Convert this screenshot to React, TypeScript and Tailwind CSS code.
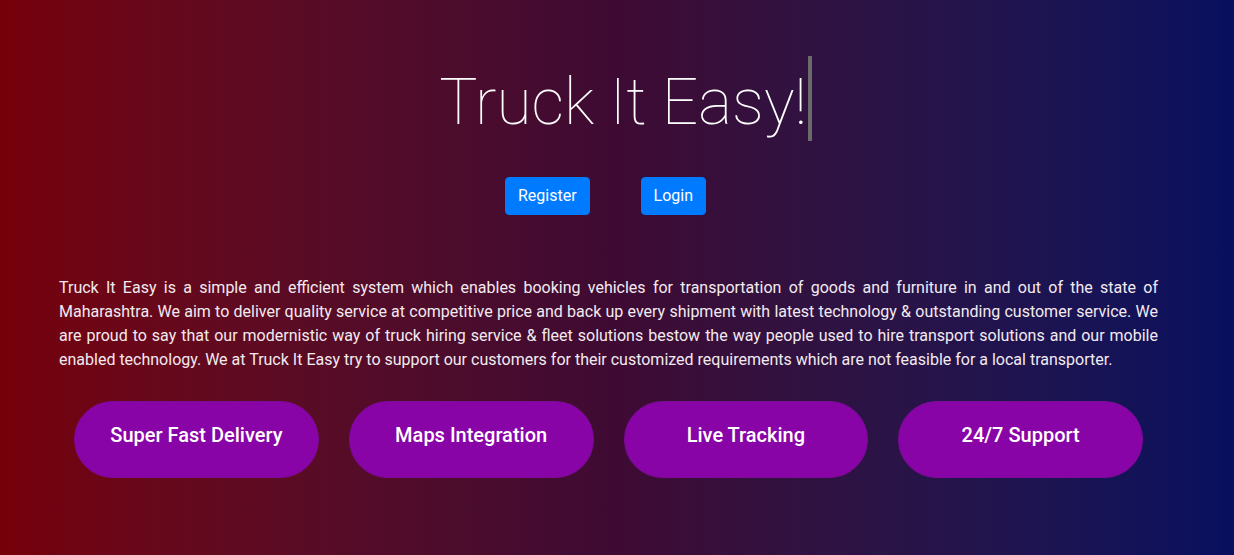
import React from 'react';

const features = ['Super Fast Delivery', 'Maps Integration', 'Live Tracking', '24/7 Support'];

export default function App() {
  return (
    <div
      className="min-h-screen w-full bg-gradient-to-r from-[#760009] via-[#3e0a33] to-[#07105f] text-white"
      style={{ fontFamily: 'Roboto, "Noto Sans", sans-serif' }}
    >
      <div className="pt-[56px] flex flex-col items-center">
        {/* Title with typing cursor */}
        <div className="flex items-start pl-[17px]">
          <h1 className="mt-[4px] text-[64px] leading-[86px] font-thin tracking-normal">Truck It Easy!</h1>
          <span className="ml-[1px] w-[4px] h-[85px] bg-[#6b6b6b]" />
        </div>

        <div className="mt-[31px] flex gap-[51px] pr-[23px]">
          <button className="px-[12px] py-[6px] text-base leading-6 bg-[#007bff] border border-[#007bff] rounded-[4px] text-white">
            Register
          </button>
          <button className="px-[12px] py-[6px] text-base leading-6 bg-[#007bff] border border-[#007bff] rounded-[4px] text-white">
            Login
          </button>
        </div>
      </div>

      <div className="mx-[59px] w-[1099px]">
        <p className="mt-[61px] text-base leading-6 text-justify text-[#f3eaf0]">
          Truck It Easy is a simple and efficient system which enables booking vehicles for transportation of goods and
          furniture in and out of the state of Maharashtra. We aim to deliver quality service at competitive price and
          back up every shipment with latest technology &amp; outstanding customer service. We are proud to say that our
          modernistic way of truck hiring service &amp; fleet solutions bestow the way people used to hire transport
          solutions and our mobile enabled technology. We at Truck It Easy try to support our customers for their
          customized requirements which are not feasible for a local transporter.
        </p>

        <div className="mt-[29px] grid grid-cols-4">
          {features.map((f) => (
            <div key={f} className="px-[15px]">
              <div className="h-[77px] rounded-full bg-[#8904a7] border border-[#7d0a98] pt-[21px] text-center">
                <h5 className="text-[20px] leading-[24px] font-medium">{f}</h5>
              </div>
            </div>
          ))}
        </div>
      </div>
    </div>
  );
}
